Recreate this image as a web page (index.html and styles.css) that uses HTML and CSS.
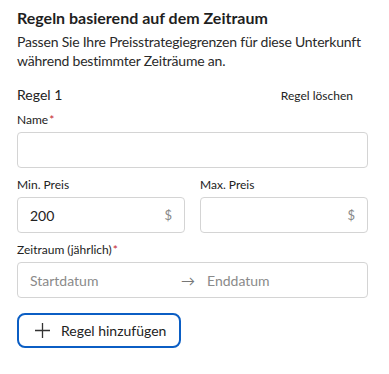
FILE: index.html
```html
<!DOCTYPE html>
<html lang="de">
<head>
  <meta charset="UTF-8">
  <title>Regeln basierend auf dem Zeitraum</title>
  <link rel="stylesheet" href="styles.css">
</head>
<body>

<div class="panel">
  <h2>Regeln basierend auf dem Zeitraum</h2>
  <p class="intro">Passen Sie Ihre Preisstrategiegrenzen für diese Unterkunft<br>während bestimmter Zeiträume an.</p>

  <div class="rule-head">
    <span>Regel 1</span>
    <a class="delete" href="#">Regel löschen</a>
  </div>

  <label class="field-label">Name<span class="req">*</span></label>
  <div class="input"></div>

  <div class="price-row">
    <div>
      <label class="field-label">Min. Preis</label>
      <div class="input"><span>200</span><span class="unit">$</span></div>
    </div>
    <div>
      <label class="field-label">Max. Preis</label>
      <div class="input"><span></span><span class="unit">$</span></div>
    </div>
  </div>

  <label class="field-label">Zeitraum (jährlich)<span class="req">*</span></label>
  <div class="input dates">
    <span class="ph start">Startdatum</span>
    <span class="arrow">→</span>
    <span class="ph end">Enddatum</span>
  </div>

  <div class="btn-add">
    <svg width="15" height="15" viewBox="0 0 15 15"><path d="M7.5 0v15M0 7.5h15" stroke="#333" stroke-width="1.3" fill="none"/></svg>
    Regel hinzufügen
  </div>
</div>

</body>
</html>
```

FILE: styles.css
```css
* {
  box-sizing: border-box;
  margin: 0;
  padding: 0;
}
body {
  font-family: Lato, "Noto Sans", sans-serif;
  color: #222;
  background: #fff;
}
.panel {
  padding: 8px 21px 0 17px;
}
h2 {
  font-size: 16px;
  font-weight: 700;
  line-height: 20px;
  color: #1f1f1f;
}
.intro {
  font-size: 14px;
  line-height: 19px;
  letter-spacing: -0.2px;
  white-space: nowrap;
  margin-top: 4px;
  color: #2a2a2a;
}
.rule-head {
  display: flex;
  justify-content: space-between;
  align-items: baseline;
  margin-top: 16px;
  font-size: 14px;
}
.rule-head .delete {
  font-size: 12px;
  color: #222;
  text-decoration: none;
  margin-right: 15px;
}
.field-label {
  display: block;
  font-size: 12px;
  line-height: 16px;
  margin-top: 9px;
  margin-bottom: 4px;
}
.req {
  color: #c4262e;
  margin-left: 1px;
}
.input {
  height: 36px;
  border: 1px solid #d4d4d4;
  border-radius: 4px;
  display: flex;
  align-items: center;
  justify-content: space-between;
  padding: 0 12px;
  font-size: 14px;
}
.input .unit {
  color: #888;
  font-size: 13px;
}
.price-row {
  display: grid;
  grid-template-columns: 1fr 1fr;
  gap: 15px;
}
.dates {
  justify-content: flex-start;
}
.dates .ph {
  color: #8a8a8a;
}
.dates .start {
  flex: 1;
}
.dates .end {
  flex: 0 0 148px;
}
.dates .arrow {
  color: #777;
  margin-right: 12px;
}
.btn-add {
  display: inline-flex;
  align-items: center;
  gap: 11px;
  margin-top: 15px;
  height: 35px;
  padding: 0 13px 0 16px;
  border: 2px solid #0b5ec4;
  border-radius: 8px;
  font-size: 14px;
  color: #222;
  cursor: pointer;
}
```
